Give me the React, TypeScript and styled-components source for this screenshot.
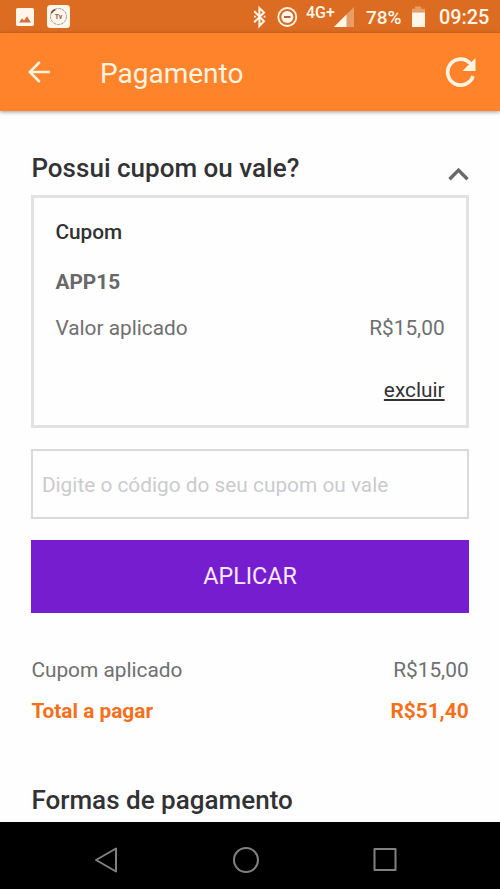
import React from 'react';
import styled, { createGlobalStyle } from 'styled-components';

const GlobalStyle = createGlobalStyle`
  *, *::before, *::after { box-sizing: border-box; }
  body { margin: 0; background: #fefefe; }
`;

const Screen = styled.div`
  display: flex;
  flex-direction: column;
  width: 500px;
  height: 889px;
  overflow: hidden;
  background: #fefefe;
  color: #323234;
  font-family: Roboto, sans-serif;
  font-size: 20.83px;
  line-height: 24px;
`;

const StatusBar = styled.header`
  display: flex;
  flex: none;
  justify-content: space-between;
  height: 33px;
  padding: 0 11px 0 15px;
  background: #dc6c21;
  color: #fff6ea;
`;

const StatusGroup = styled.div<{ $gap?: number }>`
  display: flex;
  gap: ${({ $gap = 0 }) => $gap}px;
`;

const StatusIcon = styled.svg<{ $left?: number }>`
  display: block;
  flex: none;
  margin-left: ${({ $left = 0 }) => $left}px;
`;

const BadgeText = styled.text`
  font: 700 7px Roboto, sans-serif;
  fill: #a05a48;
  text-anchor: middle;
`;

const StatusText = styled.span<{ $size: number; $left: number; $line: number; $width: number }>`
  width: ${({ $width }) => $width}px;
  margin-left: ${({ $left }) => $left}px;
  font-size: ${({ $size }) => $size}px;
  font-weight: 500;
  line-height: ${({ $line }) => $line}px;
  white-space: nowrap;
`;

const AppBar = styled.div`
  display: flex;
  flex: none;
  align-items: center;
  height: 78px;
  padding: 0 23px 0 26px;
  background: #ff832a;
  color: #fff3e2;
  box-shadow: 0 1px 4px rgba(0, 0, 0, 0.4);
  z-index: 1;
`;

const AppTitle = styled.h1`
  flex: 1;
  margin: 3px 0 0 48px;
  font-size: 28px;
  font-weight: 400;
  line-height: 33px;
`;

const IconButton = styled.button`
  display: flex;
  padding: 0;
  border: 0;
  background: none;
  color: inherit;
`;

const Content = styled.main`
  display: flex;
  flex: 1;
  flex-direction: column;
  min-height: 0;
  padding: 42px 31.4px 0;
`;

const SectionHeader = styled.div`
  display: flex;
  justify-content: space-between;
  height: 42px;
`;

const SectionTitle = styled.h2`
  margin: 0;
  font-size: 26.04px;
  font-weight: 500;
  line-height: 30px;
`;

const Toggle = styled(IconButton)`
  align-self: flex-start;
  padding-top: 14px;
  color: #69696b;
`;

const CouponCard = styled.section`
  display: flex;
  flex-direction: column;
  height: 233px;
  padding: 22px 21px 0;
  border: 3px solid #e2e2e2;
`;

const CouponLabel = styled.h3`
  margin: 0 0 26px;
  font-size: inherit;
  font-weight: 500;
`;

const CouponCode = styled.strong`
  margin-bottom: 22px;
  color: #68686a;
  font-weight: 700;
`;

const Row = styled.div<{ $total?: boolean }>`
  display: flex;
  justify-content: space-between;
  color: ${({ $total }) => ($total ? '#f4701c' : '#6f6f71')};
  font-weight: ${({ $total }) => ($total ? 700 : 400)};
`;

const RemoveLink = styled.a`
  align-self: flex-end;
  margin-top: 38px;
  text-decoration: underline;
  text-decoration-thickness: 1.5px;
  text-underline-offset: 1.5px;
`;

const CodeInput = styled.input`
  height: 70px;
  margin: 21px 0;
  padding: 1px 8.5px 0;
  border: 2px solid #dadada;
  border-radius: 0;
  background: #fefefe;
  color: #323234;
  font: inherit;
  &::placeholder {
    color: #cbcbcd;
    opacity: 1;
  }
`;

const ApplyButton = styled.button`
  height: 73px;
  padding: 0 0 2px;
  border: 0;
  background: #771dd0;
  color: #fbeaff;
  font-family: inherit;
  font-size: 23.3px;
`;

const Summary = styled.div`
  display: flex;
  flex-direction: column;
  gap: 17px;
  margin: 45px 0 62px;
`;

const NavBar = styled.nav`
  display: flex;
  flex: none;
  align-items: center;
  height: 67px;
  padding: 8px 102px 0 93px;
  justify-content: space-between;
  background: #000;
  color: #818181;
`;

export default function App() {
  return (
    <Screen>
      <GlobalStyle />
      <StatusBar>
        <StatusGroup $gap={12}>
          <StatusIcon width="20" height="33" viewBox="0 0 20 33">
            <rect x="1" y="8" width="18" height="18" rx="1.8" fill="currentColor" />
            <path d="M4 22.5l3-4.2 2 2.3 3-4.4 4 6.3z" fill="#d4703e" />
          </StatusIcon>
          <StatusIcon width="24" height="33" viewBox="0 0 24 33">
            <rect x="0" y="5" width="23" height="23" rx="3.5" fill="currentColor" />
            <circle cx="11.5" cy="16.5" r="8" fill="none" stroke="#9a9ca8" strokeWidth="1" strokeDasharray="3 .7" />
            <path d="M4.3 13q1.5-2.7 4-3.6" fill="none" stroke="#5d4b48" strokeWidth="1.6" />
            <BadgeText x="11.5" y="19">Tv</BadgeText>
          </StatusIcon>
        </StatusGroup>
        <StatusGroup>
          <StatusIcon width="14" height="33" viewBox="0 0 14 33">
            <path d="M1.2 11.2l9.8 10L6.4 26V8L11 12.4 1.2 22.2" fill="none" stroke="currentColor" strokeWidth="2" />
            <path d="M1 15.8h1.8v1.8H1zM10.7 15.8h1.8v1.8h-1.8z" fill="currentColor" />
          </StatusIcon>
          <StatusIcon $left={10} width="22" height="33" viewBox="0 0 22 33">
            <circle cx="10.3" cy="17" r="9" fill="none" stroke="currentColor" strokeWidth="1.8" />
            <circle cx="10.3" cy="17" r="6" fill="currentColor" />
            <path d="M7 17h6.6" stroke="#b5653a" strokeWidth="2" />
          </StatusIcon>
          <StatusText $size={16} $left={7} $line={25} $width={28}>4G+</StatusText>
          <StatusIcon width="21" height="33" viewBox="0 0 21 33">
            <path d="M20 7v20H0z" fill="currentColor" opacity=".35" />
            <path d="M12.5 14.5V27H0z" fill="currentColor" />
          </StatusIcon>
          <StatusText $size={19} $left={11} $line={35} $width={36}>78%</StatusText>
          <StatusIcon $left={9} width="15" height="33" viewBox="0 0 15 33">
            <path d="M4 6.5h6v2.2h4v4H1v-4h3z" fill="currentColor" opacity=".35" />
            <path d="M1 12.5h13V27H1z" fill="currentColor" />
          </StatusIcon>
          <StatusText $size={19.85} $left={13} $line={35} $width={50}>09:25</StatusText>
        </StatusGroup>
      </StatusBar>

      <AppBar>
        <IconButton aria-label="Voltar">
          <svg width="26" height="26" viewBox="0 0 26 26" fill="none" stroke="currentColor" strokeWidth="2.5">
            <path d="M24 13H3.800M13.800 3L3.800 13l10 10" />
          </svg>
        </IconButton>
        <AppTitle>Pagamento</AppTitle>
        <IconButton aria-label="Atualizar">
          <svg width="32" height="32" viewBox="0 0 32 32">
            <path d="M28 20.2A13 13 0 1 1 25.500 7.600" fill="none" stroke="currentColor" strokeWidth="3.7" />
            <path d="M30.500 2v13H17.500z" fill="currentColor" />
          </svg>
        </IconButton>
      </AppBar>

      <Content>
        <SectionHeader>
          <SectionTitle>Possui cupom ou vale?</SectionTitle>
          <Toggle aria-label="Recolher">
            <svg width="21" height="14" viewBox="0 0 21 14" fill="none" stroke="currentColor" strokeWidth="3.4">
              <path d="M1.500 12.300l9-9.200 9 9.200" />
            </svg>
          </Toggle>
        </SectionHeader>

        <CouponCard>
          <CouponLabel>Cupom</CouponLabel>
          <CouponCode>APP15</CouponCode>
          <Row>
            <span>Valor aplicado</span>
            <span>R$15,00</span>
          </Row>
          <RemoveLink>excluir</RemoveLink>
        </CouponCard>

        <CodeInput placeholder="Digite o código do seu cupom ou vale" />
        <ApplyButton>APLICAR</ApplyButton>

        <Summary>
          <Row>
            <span>Cupom aplicado</span>
            <span>R$15,00</span>
          </Row>
          <Row $total>
            <span>Total a pagar</span>
            <span>R$51,40</span>
          </Row>
        </Summary>

        <SectionTitle>Formas de pagamento</SectionTitle>
      </Content>

      <NavBar>
        <IconButton aria-label="Voltar">
          <svg width="26" height="28" viewBox="0 0 26 28" fill="none" stroke="currentColor" strokeWidth="2" strokeLinejoin="round">
            <path d="M23 2.500v23L3 14z" />
          </svg>
        </IconButton>
        <IconButton aria-label="Início">
          <svg width="28" height="28" viewBox="0 0 28 28" fill="none" stroke="currentColor" strokeWidth="2">
            <circle cx="14" cy="14" r="12" />
          </svg>
        </IconButton>
        <IconButton aria-label="Recentes">
          <svg width="26" height="28" viewBox="0 0 26 28" fill="none" stroke="currentColor" strokeWidth="2" strokeLinejoin="round">
            <path d="M2.500 3h21v21h-21z" />
          </svg>
        </IconButton>
      </NavBar>
    </Screen>
  );
}
